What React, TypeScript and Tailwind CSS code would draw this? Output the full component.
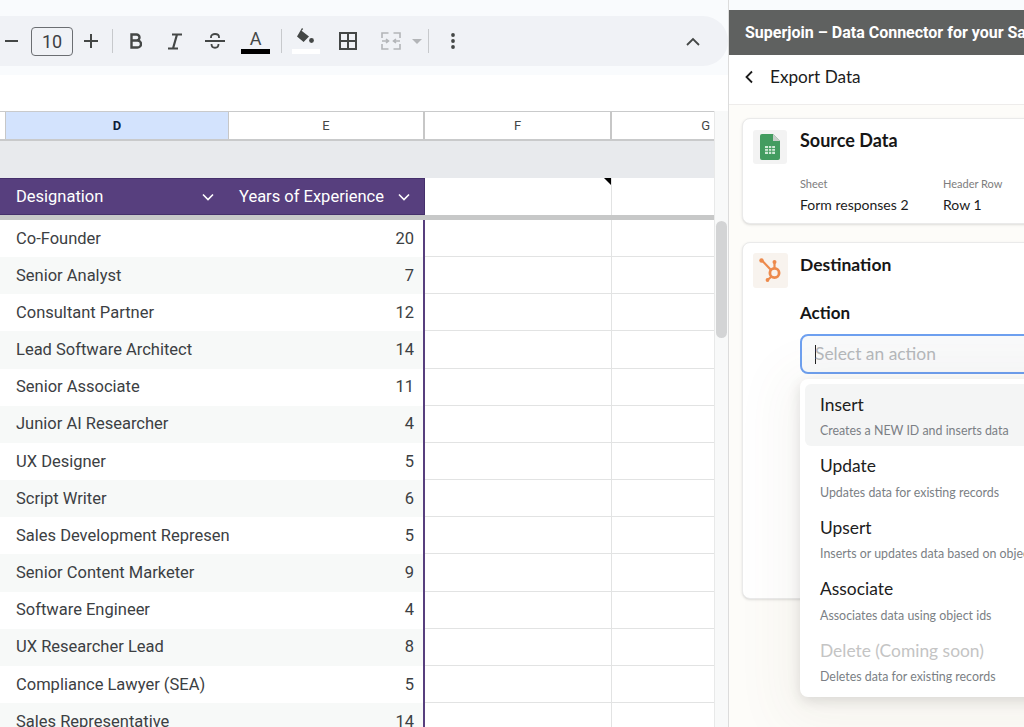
import React from "react";

const rows: [string, number][] = [
  ["Co-Founder", 20],
  ["Senior Analyst", 7],
  ["Consultant Partner", 12],
  ["Lead Software Architect", 14],
  ["Senior Associate", 11],
  ["Junior AI Researcher", 4],
  ["UX Designer", 5],
  ["Script Writer", 6],
  ["Sales Development Representative", 5],
  ["Senior Content Marketer", 9],
  ["Software Engineer", 4],
  ["UX Researcher Lead", 8],
  ["Compliance Lawyer (SEA)", 5],
  ["Sales Representative", 14],
];

const actions = [
  ["Insert", "Creates a NEW ID and inserts data"],
  ["Update", "Updates data for existing records"],
  ["Upsert", "Inserts or updates data based on object ids"],
  ["Associate", "Associates data using object ids"],
  ["Delete (Coming soon)", "Deletes data for existing records"],
];

const Chevron = () => (
  <svg width="14" height="14" viewBox="0 0 14 14" fill="none" stroke="white" strokeWidth="1.6">
    <path d="M2 4.5 L7 9.5 L12 4.5" />
  </svg>
);

const Sep = ({ className }: { className: string }) => <div className={`h-[24px] w-px bg-[#c7c9cc] shrink-0 ${className}`} />;

function Toolbar() {
  return (
    <div className="h-[111px] shrink-0 bg-white">
      <div className="h-[75px] bg-[#f9fbfd] pt-[16px]">
        <div className="flex items-center h-[50px] -ml-[20px] pl-[25px] w-[748px] rounded-r-[25px] bg-[#f0f2f6] text-[#444746]">
          <svg className="shrink-0" width="13" height="14" viewBox="0 0 13 14"><rect x="0" y="6" width="13" height="2" fill="#444746" /></svg>
          <div className="ml-[13px] w-[42px] h-[29px] shrink-0 rounded-[4px] border border-[#6b6e72] flex items-center justify-center text-[18px] font-['Roboto',sans-serif] text-[#3c4043]">10</div>
          <svg className="ml-[11px] shrink-0" width="14" height="14" viewBox="0 0 14 14"><path d="M6 0h2v6h6v2H8v6H6V8H0V6h6z" fill="#444746" /></svg>
          <Sep className="ml-[14px]" />
          <svg className="ml-[17px] shrink-0" width="12" height="16" viewBox="0 0 12 16" fill="none" stroke="#444746" strokeWidth="2.4">
            <path d="M1.5 1.5h5a3 3 0 0 1 0 6h-5zM1.5 7.5h6a3.4 3.4 0 0 1 0 7h-6z" />
          </svg>
          <svg className="ml-[26px] shrink-0" width="14" height="17" viewBox="0 0 14 17" fill="none" stroke="#444746" strokeWidth="2.2">
            <path d="M4 1.5h10M0 15.5h10M9 1.5 L5 15.5" />
          </svg>
          <svg className="ml-[23px] shrink-0" width="20" height="18" viewBox="0 0 20 18" fill="none" stroke="#444746" strokeWidth="1.8">
            <path d="M0 9h20M6 6V5c0-4 8-4 8 0v1M6.5 12c0 5 7 5 7 0" />
          </svg>
          <div className="ml-[16px] w-[29px] h-[26px] shrink-0 flex flex-col items-center justify-end">
            <span className="text-[18px] leading-[19px] font-['Roboto',sans-serif] text-[#444746]">A</span>
            <div className="w-[29px] h-[5px] mt-[1px] bg-black" />
          </div>
          <Sep className="ml-[11px]" />
          <div className="ml-[10px] w-[28px] h-[26px] shrink-0 flex flex-col items-center justify-between">
            <svg width="20" height="18" viewBox="0 0 20 18" fill="#444746">
              <path d="M6 0 7.2 1 5.6 2.8 13 8.6 7.6 14 1 8.6z" />
              <circle cx="15.5" cy="12.5" r="2.4" />
            </svg>
            <div className="w-[28px] h-[5px] bg-white" />
          </div>
          <svg className="ml-[19px] shrink-0" width="18" height="18" viewBox="0 0 18 18" fill="none" stroke="#444746" strokeWidth="2">
            <path d="M1 1h16v16H1zM9 1v16M1 9h16" />
          </svg>
          <svg className="ml-[24px] shrink-0" width="20" height="18" viewBox="0 0 20 18" fill="none" stroke="#b3b5b8" strokeWidth="1.6">
            <path d="M7.5 1H1v5M12.5 1H19v5M7.5 17H1v-5M12.5 17H19v-5M1 9h6M5 7l2.5 2L5 11M19 9h-6M15 7l-2.5 2 2.5 2" />
          </svg>
          <svg className="ml-[11px] shrink-0" width="10" height="5" viewBox="0 0 10 5"><path d="M0 0h10L5 5z" fill="#b3b5b8" /></svg>
          <Sep className="ml-[6px]" />
          <svg className="ml-[22px] shrink-0" width="4" height="16" viewBox="0 0 4 16" fill="#444746">
            <circle cx="2" cy="2" r="1.9" /><circle cx="2" cy="8" r="1.9" /><circle cx="2" cy="14" r="1.9" />
          </svg>
          <svg className="ml-[231px] shrink-0" width="14" height="9" viewBox="0 0 14 9" fill="none" stroke="#444746" strokeWidth="1.8">
            <path d="M1 8 L7 2 L13 8" />
          </svg>
        </div>
      </div>
    </div>
  );
}

function Sheet() {
  return (
    <div className="flex-1 min-h-0 flex font-['Roboto',sans-serif] overflow-hidden">
      <div className="w-[714px] shrink-0 overflow-hidden">
        <div className="flex h-[30px] border-y-2 border-t border-[#c9cacb] text-[13px] text-[#444746]">
          <div className="w-[6px] border-r border-[#c7c7c7]" />
          <div className="w-[223px] bg-[#d3e3fd] flex items-center justify-center font-bold text-[#0b1d3a] border-r border-[#c7c7c7]">D</div>
          <div className="w-[196px] flex items-center justify-center border-r-2 border-[#c7c7c7]">E</div>
          <div className="w-[187px] flex items-center justify-center border-r-2 border-[#c7c7c7]">F</div>
          <div className="flex-1 flex items-center justify-end pr-[4px]">G</div>
        </div>
        <div className="h-[37px] bg-[#e8eaed]" />
        <div className="flex h-[37px]">
          <div className="w-[425px] h-[37px] bg-[#573f7e] border border-[#45306b] border-l-0 pt-[1px] flex items-center text-white text-[16.5px]">
            <div className="w-[229px] flex items-center pl-[16px] pr-[14px] justify-between">
              <span>Designation</span>
              <Chevron />
            </div>
            <div className="flex-1 flex items-center pl-[10px] pr-[13px] justify-between">
              <span>Years of Experience</span>
              <Chevron />
            </div>
          </div>
          <div className="relative w-[187px] border-r border-[#e2e3e3]">
            <div className="absolute right-0 top-0 w-0 h-0 border-t-[7px] border-l-[7px] border-t-black border-l-transparent" />
          </div>
        </div>
        <div className="h-[5px] bg-[#c7c8c8]" />
        {rows.map(([name, n], i) => (
          <div key={name} className="flex h-[37.17px] text-[16.5px] text-[#3c4043]">
            <div className={`w-[425px] pt-[1px] flex items-center border-r-2 border-[#573f7e] ${i % 2 ? "bg-[#f7f9f8]" : "bg-white"}`}>
              <div className="w-[229px] pl-[16px] overflow-hidden whitespace-nowrap">{name}</div>
              <div className="flex-1 text-right pr-[9px]">{n}</div>
            </div>
            <div className="w-[187px] border-r border-b border-[#e2e3e3]" />
            <div className="flex-1 border-b border-[#e2e3e3]" />
          </div>
        ))}
      </div>
      <div className="flex-1 bg-[#f8f9f9] border-l border-[#e8e9e9] pl-[1px] pr-[1px]">
        <div className="mt-[110px] w-[11px] h-[117px] rounded-[6px] bg-[#d3d4d5]" />
      </div>
    </div>
  );
}

function Panel() {
  return (
    <div className="flex-1 min-w-0 flex flex-col border-l border-[#dcdcdc] bg-[#f9fbfd] overflow-hidden font-['Lato',sans-serif]">
      <div className="h-[10px] shrink-0" />
      <div className="h-[45px] shrink-0 bg-[#5f6160] flex items-center pl-[16px] overflow-hidden whitespace-nowrap font-['Roboto',sans-serif] font-bold text-[16px] text-white">
        Superjoin – Data Connector for your Salesforce
      </div>
      <div className="h-[50px] shrink-0 bg-white border-b border-[#eeeceb] flex items-center pl-[15px] pb-[6px] text-[#1c1c1c]">
        <svg width="10" height="14" viewBox="0 0 10 14" fill="none" stroke="#1c1c1c" strokeWidth="1.8"><path d="M8 1.5 L2.5 7 L8 12.5" /></svg>
        <span className="ml-[16px] text-[17.2px]">Export Data</span>
      </div>
      <div className="flex-1 min-h-0 bg-[#fdfcf9] pt-[13px] pl-[13px]">
        <div className="w-[340px] h-[106px] bg-white rounded-[8px] border border-[#eaeaea] shadow-sm flex px-[10px] pt-[11px]">
          <div className="w-[34px] h-[34px] shrink-0 rounded-[3px] bg-[#f3f3f3] flex items-center justify-center">
            <svg width="20" height="26" viewBox="0 0 20 26">
              <path d="M2 0h11l7 7v17a2 2 0 0 1-2 2H2a2 2 0 0 1-2-2V2a2 2 0 0 1 2-2z" fill="#439c60" />
              <path d="M13 0l7 7h-7z" fill="#c9cfcb" />
              <path d="M5 12h10v8H5z" fill="#cfe8d6" />
              <path d="M5 14.5h10M5 17.3h10M8.5 12v8M11.7 12v8" stroke="#439c60" strokeWidth="0.9" />
            </svg>
          </div>
          <div className="ml-[13px] flex-1">
            <div className="text-[18px] leading-[22px] font-bold text-[#161616] mt-[-1px]">Source Data</div>
            <div className="flex mt-[26px]">
              <div className="w-[143px]">
                <div className="text-[11px] leading-[14px] text-[#7d7d7d]">Sheet</div>
                <div className="text-[14px] leading-[18px] mt-[5px] text-[#1c1c1c]">Form responses 2</div>
              </div>
              <div>
                <div className="text-[11px] leading-[14px] text-[#7d7d7d]">Header Row</div>
                <div className="text-[14px] leading-[18px] mt-[5px] text-[#1c1c1c]">Row 1</div>
              </div>
            </div>
          </div>
        </div>
        <div className="relative w-[340px] h-[357px] mt-[18px] bg-white rounded-[8px] border border-[#eaeaea] shadow-sm flex px-[10px] pt-[10px]">
          <div className="w-[35px] h-[35px] shrink-0 rounded-[3px] bg-[#f8f3ee] flex items-center justify-center">
            <svg width="24" height="26" viewBox="0 0 24 26" fill="none" stroke="#ed8a4c">
              <circle cx="15.5" cy="15" r="4.6" strokeWidth="2.8" />
              <path d="M15.5 11V4M12 12 2.5 2M12 19l-3.5 3" strokeWidth="2.2" />
              <circle cx="15.5" cy="4" r="2" fill="#ed8a4c" strokeWidth="0" />
              <circle cx="2.5" cy="2.5" r="2.2" fill="#ed8a4c" strokeWidth="0" />
              <circle cx="8.5" cy="22" r="1.9" fill="#ed8a4c" strokeWidth="0" />
            </svg>
          </div>
          <div className="ml-[12px] flex-1">
            <div className="text-[17.5px] leading-[22px] font-bold text-[#161616] mt-[1px]">Destination</div>
            <div className="text-[17px] leading-[22px] font-bold text-[#161616] mt-[26px]">Action</div>
            <div className="mt-[10px] h-[40px] w-[280px] rounded-[8px] border-2 border-[#6ea0f0] bg-[#f9fafb] flex items-center pl-[13px] pt-[1px] text-[17.4px] text-[#b5b8bc]">
              <div className="w-px h-[19px] bg-[#222]" />
              <span className="-ml-[1px]">Select an action</span>
            </div>
          </div>
          <div className="absolute left-[57px] top-[136px] w-[280px] h-[318px] rounded-[8px] bg-white shadow-[0_4px_14px_rgba(0,0,0,0.12),0_10px_50px_20px_rgba(120,90,60,0.05)] p-[5px]">
            {actions.map(([t, d], i) => (
              <div key={t} className={`h-[61.5px] rounded-[6px] pl-[15px] pt-[8.5px] ${i === 0 ? "bg-[#f4f5f5]" : ""}`}>
                <div className={`text-[17.4px] leading-[24px] ${i === 4 ? "text-[#c4c4c4]" : "text-[#202020]"}`}>{t}</div>
                <div className="text-[12.4px] leading-[16px] mt-[6.5px] text-[#7b7f85] whitespace-nowrap">{d}</div>
              </div>
            ))}
          </div>
        </div>
      </div>
    </div>
  );
}

export default function App() {
  return (
    <div className="w-[1024px] h-[727px] flex overflow-hidden bg-white">
      <div className="w-[728px] shrink-0 flex flex-col overflow-hidden">
        <Toolbar />
        <Sheet />
      </div>
      <Panel />
    </div>
  );
}
